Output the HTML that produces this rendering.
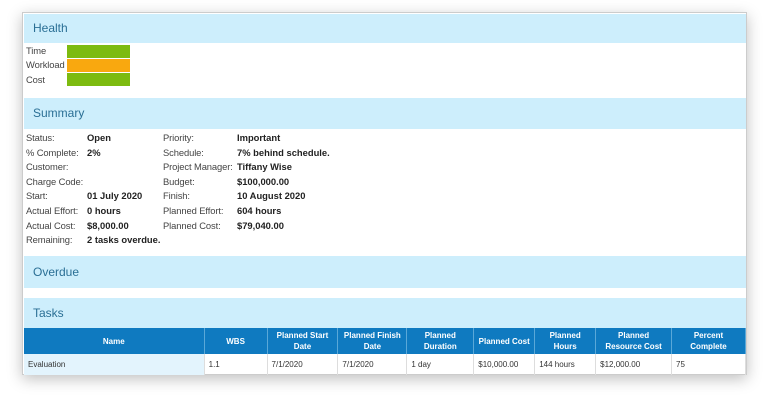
<!DOCTYPE html>
<html><head><style>
body{margin:0;width:768px;height:404px;background:#fff;font-family:"Liberation Sans",Arial,sans-serif;position:relative;overflow:hidden}
.card{position:absolute;left:22px;top:12px;width:723px;height:361px;border:1px solid #ccc;box-shadow:0 4px 14px rgba(0,0,0,.25);background:#fff}
.band{position:absolute;left:1px;right:0;background:#cdeefc;color:#2a6f95;font-size:12px;padding-left:9px;box-sizing:border-box}
.t{position:absolute;font-size:9.4px;color:#444;white-space:nowrap;letter-spacing:-0.1px}
.b{font-weight:bold;color:#222;letter-spacing:0}
.bar{position:absolute;left:44px;width:63px;height:13px}
table{position:absolute;left:1px;top:315px;border-collapse:collapse;font-size:8px}
th{background:#0f7ac0;color:#fff;font-weight:bold;height:26px;border-right:1px solid #5aa8d8;padding:0 2px;line-height:11px}
td{height:19px;color:#333;border-right:1px solid #ddd;padding-left:4px}
</style></head><body>
<div class="card">
<div class="band" style="top:1px;height:29px;line-height:29px">Health</div>
<div class="t" style="left:3px;top:31px;line-height:14.3px">Time<br>Workload<br>Cost</div>
<div class="bar" style="top:32px;background:#7dbb10"></div>
<div class="bar" style="top:46px;background:#f9a80f"></div>
<div class="bar" style="top:60px;background:#7dbb10"></div>
<div class="band" style="top:85px;height:31px;line-height:31px">Summary</div>
<div class="t" style="left:3px;top:118px;line-height:14.6px">Status:<br>% Complete:<br>Customer:<br>Charge Code:<br>Start:<br>Actual Effort:<br>Actual Cost:<br>Remaining:</div>
<div class="t b" style="left:64px;top:118px;line-height:14.6px">Open<br>2%<br><br><br>01 July 2020<br>0 hours<br>$8,000.00<br>2 tasks overdue.</div>
<div class="t" style="left:140px;top:118px;line-height:14.6px">Priority:<br>Schedule:<br>Project Manager:<br>Budget:<br>Finish:<br>Planned Effort:<br>Planned Cost:</div>
<div class="t b" style="left:214px;top:118px;line-height:14.6px">Important<br>7% behind schedule.<br>Tiffany Wise<br>$100,000.00<br>10 August 2020<br>604 hours<br>$79,040.00</div>
<div class="band" style="top:243px;height:32px;line-height:32px">Overdue</div>
<div class="band" style="top:285px;height:31px;line-height:31px">Tasks</div>
<table>
<tr><th style="width:176px">Name</th><th style="width:58px">WBS</th><th style="width:66px">Planned Start<br>Date</th><th style="width:64px">Planned Finish<br>Date</th><th style="width:62px">Planned<br>Duration</th><th style="width:56px">Planned Cost</th><th style="width:56px">Planned<br>Hours</th><th style="width:71px">Planned<br>Resource Cost</th><th style="width:69px">Percent<br>Complete</th></tr>
<tr><td style="background:#e3f4fd">Evaluation</td><td>1.1</td><td>7/1/2020</td><td>7/1/2020</td><td>1 day</td><td>$10,000.00</td><td>144 hours</td><td>$12,000.00</td><td>75</td></tr>
</table>
</div>
</body></html>
